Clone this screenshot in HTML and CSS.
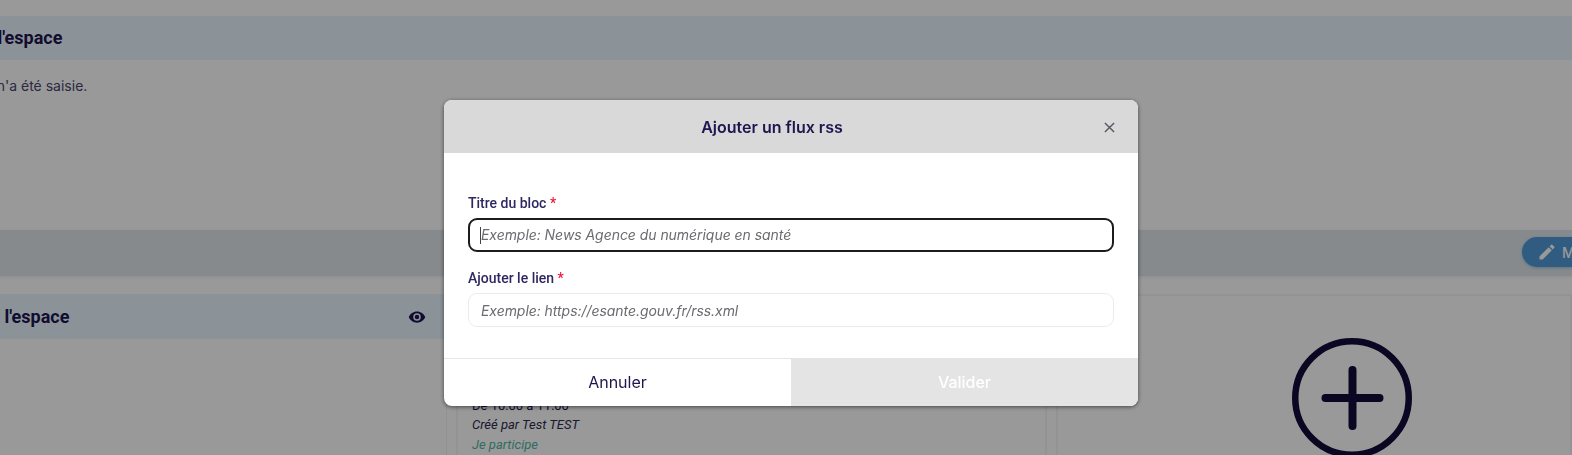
FILE: index.html
```html
<!DOCTYPE html>
<html lang="fr">
<head>
<meta charset="utf-8">
<title>Ajouter un flux rss</title>
<link rel="stylesheet" href="styles.css">
</head>
<body>
<main class="page">
  <section class="block-top">
    <h2 class="band band-title">Description de l'espace</h2>
    <p class="desc">Aucune description n'a été saisie.</p>
  </section>
  <div class="toolbar">
    <button class="edit" type="button">
      <svg viewBox="0 0 24 24" class="pencil"><path d="M3 17.250V21h3.750L17.810 9.940l-3.750-3.750L3 17.250zM20.710 7.040a1 1 0 0 0 0-1.410l-2.340-2.340a1 1 0 0 0-1.410 0l-1.830 1.830 3.750 3.750 1.830-1.830z"/></svg>
      <span>Modifier</span>
    </button>
  </div>
  <div class="columns">
    <section class="col-main">
      <div class="band band-second">
        <h2 class="band-title">Présentation de l'espace</h2>
        <svg viewBox="0 0 24 24" class="eye"><path d="M12 4.500C7 4.500 2.730 7.610 1 12c1.730 4.390 6 7.500 11 7.500s9.270-3.110 11-7.500c-1.730-4.390-6-7.500-11-7.500zM12 17a5 5 0 1 1 0-10 5 5 0 0 1 0 10zm0-8a3 3 0 1 0 0 6 3 3 0 0 0 0-6z"/></svg>
      </div>
    </section>
    <section class="card">
      <div class="event">
        <p class="time">De 10:00 à 11:00</p>
        <p class="author">Créé par Test TEST</p>
        <p class="join">Je participe</p>
      </div>
    </section>
    <section class="add">
      <svg viewBox="0 0 120 120" class="plus"><circle cx="60" cy="60" r="56.750" fill="none" stroke-width="6.500"/><path d="M33.500 60h54M60.500 32v56" fill="none" stroke-width="8" stroke-linecap="round"/></svg>
    </section>
  </div>
</main>
<div class="overlay"></div>
<div class="modal" role="dialog">
  <header class="modal-head">
    <h3>Ajouter un flux rss</h3>
    <svg viewBox="0 0 12 12" class="close"><path d="M1 1l10 10M11 1L1 11"/></svg>
  </header>
  <form class="modal-body">
    <label class="label">Titre du bloc <span class="req">*</span></label>
    <div class="input focused"><i class="caret"></i><span>Exemple: News Agence du numérique en santé</span></div>
    <label class="label second">Ajouter le lien <span class="req">*</span></label>
    <div class="input"><span>Exemple: https://esante.gouv.fr/rss.xml</span></div>
  </form>
  <footer class="modal-foot">
    <div class="btn cancel">Annuler</div>
    <div class="btn valid">Valider</div>
  </footer>
</div>
</body>
</html>
```
FILE: styles.css
```css
* { box-sizing: border-box; }
html, body { margin: 0; height: 455px; overflow: hidden; background: #fff; }
body { font-family: Inter, "Liberation Sans", sans-serif; color: #1f1650; }
h2, h3, p { margin: 0; }

.page { width: 1872px; margin-left: -300px; padding-top: 16px; height: 455px; overflow: hidden; }
.band { background: #e8f5ff; }
.band-title { font-family: Roboto, sans-serif; font-weight: 700; font-size: 18px; color: #1f1650; }
.block-top { height: 214px; }
.block-top > .band { height: 44px; line-height: 44px; padding-left: 176px; }
.desc { font-size: 14px; line-height: 20px; margin-top: 16px; padding-left: 164px; color: #4a4570; }

.toolbar { height: 46px; background: #dfe6ea; display: flex; align-items: center; box-shadow: 0 1px 3px rgba(0,0,0,.08); }
.edit { flex: none; width: 354px; height: 30px; padding: 0 0 0 15px; margin: -2px -304px 0 auto; border: 0; border-radius: 15px 0 0 15px; background: #5099d9; color: #fff; font: 500 14px Inter, sans-serif; display: flex; align-items: center; gap: 5px; box-shadow: 0 1px 3px rgba(80,153,217,.5); }
.pencil { width: 20px; height: 20px; fill: #fff; }

.columns { display: flex; padding-top: 18px; }
.col-main { width: 747px; height: 200px; border-right: 1px solid #f2f2f2; }
.band-second { height: 45px; display: flex; align-items: center; justify-content: space-between; padding: 0 20px 0 172px; }
.eye { width: 18px; height: 18px; fill: #1f1650; }

.card { width: 591px; height: 200px; margin-left: 9px; border: 2px solid #f5f5f5; padding: 99.500px 14px 0; font-family: Roboto, sans-serif; font-size: 13px; line-height: 19.500px; }
.time { color: #1f1650; }
.author { font-style: italic; color: #2e2a50; }
.join { font-style: italic; color: #4fb79d; }

.add { flex: 1; margin-left: 9px; border: 2px solid #f5f5f5; padding: 42px 0 0 234px; }
.plus { display: block; width: 120px; height: 120px; stroke: #130b38; }

.overlay { position: fixed; inset: 0; background: rgba(0,0,0,.4); }

.modal { position: fixed; left: 444px; top: 100px; width: 694px; height: 306px; background: #fff; border-radius: 8px; overflow: hidden; display: flex; flex-direction: column; box-shadow: 0 1px 4px rgba(0,0,0,.55); }
.modal-head { height: 53px; flex: none; background: #d9d9d9; display: flex; align-items: center; justify-content: center; position: relative; }
.modal-head h3 { font-size: 16px; font-weight: 600; color: #1f1650; line-height: 54px; margin-right: 38px; }
.close { position: absolute; left: 660px; top: 22px; width: 11px; height: 11px; stroke: #55555f; stroke-width: 1.500; fill: none; }
.modal-body { flex: 1; padding: 40px 24px 0; }
.label { display: block; font-family: Roboto, sans-serif; font-size: 14px; font-weight: 500; line-height: 20px; color: #2e2760; height: 25px; }
.label.second { margin-top: 16px; }
.req { color: #f0143c; }
.input { height: 34px; border: 1px solid #ececec; border-radius: 9px; padding: 0 12px; display: flex; align-items: center; font-size: 14px; font-style: italic; color: #6b6b70; position: relative; letter-spacing: -.05px; }
.input.focused { border: 2px solid #1c1c1c; padding: 0 11px 1px; }
.caret { position: absolute; left: 10px; top: 7px; width: 1px; height: 17px; background: #444; }
.modal-foot { height: 48px; flex: none; display: flex; }
.btn { display: flex; align-items: center; justify-content: center; font-size: 16px; padding-bottom: 1px; }
.cancel { width: 347px; border-top: 1px solid #e6e6e6; color: #1f1650; }
.valid { flex: 1; background: #e4e4e4; color: #fff; font-weight: 500; }
```
